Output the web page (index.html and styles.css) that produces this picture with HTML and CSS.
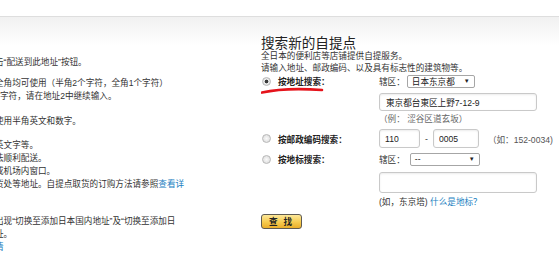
FILE: index.html
```html
<!DOCTYPE html>
<html lang="zh-CN">
<head>
    <meta charset="UTF-8">
    <title>搜索新的自提点</title>
    <link rel="stylesheet" href="styles.css">
</head>
<body>

    <div class="topbar"></div>

    <div class="page">
        <div class="side">
            <div class="side-in">
                <p class="para p1">击“配送到此地址”按钮。</p>
                <p class="para p2">全角均可使用（半角2个字符，全角1个字符）<br><span class="full">字符，请在地址2中继续输入。</span></p>
                <p class="para p3">使用半角英文和数字。</p>
                <p class="para p4">英文字等。<br>法顺利配送。<br>或机场内窗口。<br>货处等地址。自提点取货的订购方法请参照<a href="#">查看详</a></p>
                <p class="para p5">出现“切换至添加日本国内地址”及“切换至添加日<br>址。<br><a href="#">情</a></p>
            </div>
        </div>

        <div class="finder">
            <h2>搜索新的自提点</h2>
            <p class="desc">全日本的便利店等店铺提供自提服务。<br>请输入地址、邮政编码、以及具有标志性的建筑物等。</p>

            <div class="row r1">
                <div class="opt">
                    <span class="radio on"></span><b>按地址搜索：</b>
                    <svg class="scribble" width="64" height="8" viewBox="0 0 64 8">
                        <path d="M1 5.6 C14 2.6 38 1.4 61 3" fill="none" stroke="#e5131b" stroke-width="2.6" stroke-linecap="round"/>
                    </svg>
                </div>
                <div class="field">
                    <span>辖区：</span>
                    <div class="select pref">日本东京都<i>▼</i></div>
                </div>
            </div>
            <input class="box addr" type="text" value="東京都台東区上野7-12-9">
            <p class="note">（例： 涩谷区道玄坂）</p>

            <div class="row r2">
                <div class="opt"><span class="radio"></span><b>按邮政编码搜索：</b></div>
                <div class="field">
                    <input class="box zip1" type="text" value="110">
                    <span class="dash">-</span>
                    <input class="box zip2" type="text" value="0005">
                    <span class="zip-hint">（如：152-0034)</span>
                </div>
            </div>

            <div class="row r3">
                <div class="opt"><span class="radio"></span><b>按地标搜索：</b></div>
                <div class="field">
                    <span>辖区：</span>
                    <div class="select area">--<i>▼</i></div>
                </div>
            </div>
            <input class="box landmark" type="text" value="">
            <p class="hint">(如，东京塔) <a href="#">什么是地标？</a></p>

            <button class="find">查 找</button>
        </div>
    </div>

</body>
</html>
```

FILE: styles.css
```css
body {
    margin: 0;
    font-family: "Liberation Sans", "Noto Sans CJK SC", sans-serif;
    font-size: 8.6px;
    color: #333;
    background-color: #fff;
}

a {
    color: #1a7fc1;
    text-decoration: none;
}

.topbar {
    height: 16px;
    border-bottom: 1px solid #dedede;
}

.page {
    display: flex;
    height: 239px;
    background: linear-gradient(#f1f1f1, #fff 28px) no-repeat;
}

/* left column, cut off by the window edge */
.side {
    width: 250px;
    flex-shrink: 0;
    overflow: hidden;
    padding-top: 38px;
    box-sizing: border-box;
}

.side-in {
    margin-left: -5px;
    white-space: nowrap;
    line-height: 13px;
}

.para {
    margin: 0;
}

.full {
    margin-left: 5px;
}

.p1 { margin-top: 0.5px; }
.p2 { margin-top: 8px; }
.p3 { margin-top: 12px; }
.p4 { margin-top: 11px; }
.p5 { margin-top: 24px; }

/* right column */
.finder {
    margin-left: 11px;
    padding-top: 18px;
}

h2 {
    margin: 0 0 1px;
    font-family: "Noto Sans CJK SC", sans-serif;
    font-size: 13.6px;
    line-height: 14px;
    font-weight: normal;
    color: #222;
}

.desc {
    margin: 0;
    line-height: 12px;
}

.row {
    display: flex;
    align-items: center;
}

.r1 { height: 14px; }
.r2 { height: 19px; margin-top: 4px; }
.r3 { height: 14px; margin-top: 4px; }

.opt {
    position: relative;
    width: 118px;
    display: flex;
    align-items: center;
    color: #222;
}

.opt b {
    font-weight: bold;
}

.radio {
    width: 9px;
    height: 9px;
    box-sizing: border-box;
    margin: 0 7px 0 1px;
    border: 1px solid #b8b8b8;
    border-radius: 50%;
    background: radial-gradient(circle, #fafafa, #d8d8d8);
}

.radio.on {
    background: radial-gradient(circle, #3a3a3a 0 1.6px, #eee 2.2px, #d2d2d2);
}

.scribble {
    position: absolute;
    left: 0;
    top: 12px;
}

.field {
    display: flex;
    align-items: center;
}

.select {
    height: 13px;
    box-sizing: border-box;
    margin-left: 2px;
    padding: 0 4px;
    display: flex;
    align-items: center;
    justify-content: space-between;
    border: 1px solid #a6a6a6;
    border-radius: 2px;
    background-color: #fff;
    color: #222;
}

.select i {
    font-style: normal;
    font-size: 6px;
}

.pref { width: 68px; }
.area { width: 70px; margin-left: 5px; }

.box {
    display: block;
    box-sizing: border-box;
    margin: 0;
    padding: 0 6px;
    font: inherit;
    color: #222;
    border: 1px solid #c9c9c9;
    border-radius: 3px;
    box-shadow: inset 0 1px 2px rgba(0, 0, 0, 0.08);
    background-color: #fff;
}

.addr {
    width: 158px;
    height: 18px;
    margin: 5px 0 0 118px;
}

.note {
    margin: 2px 0 0 118px;
    line-height: 12px;
    color: #666;
}

.zip1 { width: 41px; height: 19px; padding-left: 5px; }
.zip2 { width: 46px; height: 19px; padding-left: 5px; }

.dash {
    margin: 0 5px;
}

.zip-hint {
    margin-left: 9px;
    color: #555;
}

.landmark {
    width: 158px;
    height: 21px;
    margin: 6px 0 0 118px;
}

.hint {
    margin: 3px 0 0 118px;
    line-height: 12px;
}

.find {
    display: block;
    width: 41px;
    height: 15px;
    margin-top: 6px;
    padding: 0;
    font-family: "Noto Sans CJK SC", sans-serif;
    font-size: 8.6px;
    font-weight: bold;
    line-height: 13px;
    letter-spacing: 2px;
    color: #222;
    border: 1px solid #5f5b52;
    border-radius: 3px;
    background: linear-gradient(#fde89a, #f6cb4f 55%, #eaae2a);
    cursor: pointer;
}
```
